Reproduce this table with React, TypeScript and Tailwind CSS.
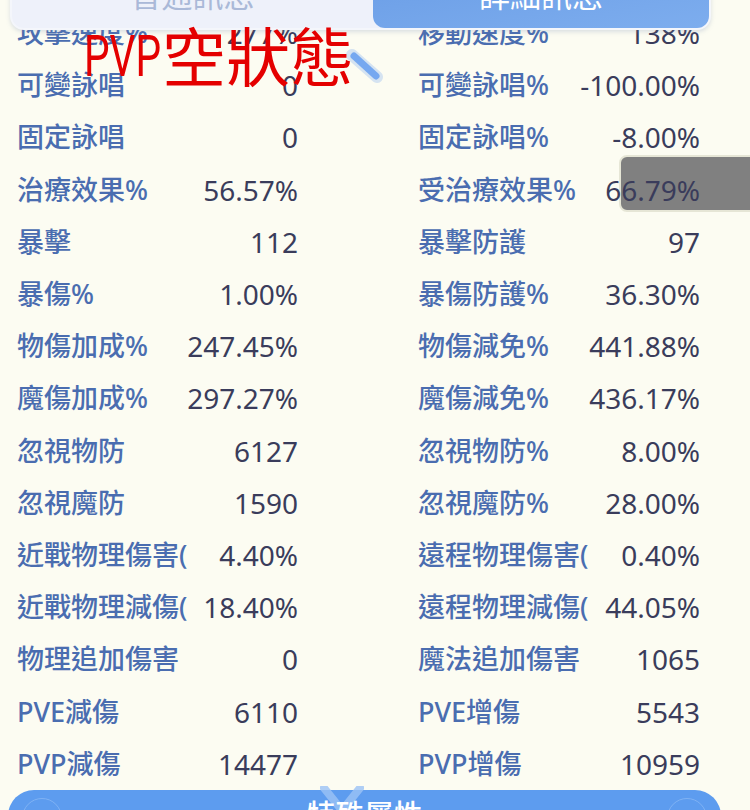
import React from 'react'

type Stat = { label: string; value: string }

const rows: [Stat, Stat][] = [
  [{ label: '攻擊速度%', value: '277%' }, { label: '移動速度%', value: '138%' }],
  [{ label: '可變詠唱', value: '0' }, { label: '可變詠唱%', value: '-100.00%' }],
  [{ label: '固定詠唱', value: '0' }, { label: '固定詠唱%', value: '-8.00%' }],
  [{ label: '治療效果%', value: '56.57%' }, { label: '受治療效果%', value: '66.79%' }],
  [{ label: '暴擊', value: '112' }, { label: '暴擊防護', value: '97' }],
  [{ label: '暴傷%', value: '1.00%' }, { label: '暴傷防護%', value: '36.30%' }],
  [{ label: '物傷加成%', value: '247.45%' }, { label: '物傷減免%', value: '441.88%' }],
  [{ label: '魔傷加成%', value: '297.27%' }, { label: '魔傷減免%', value: '436.17%' }],
  [{ label: '忽視物防', value: '6127' }, { label: '忽視物防%', value: '8.00%' }],
  [{ label: '忽視魔防', value: '1590' }, { label: '忽視魔防%', value: '28.00%' }],
  [{ label: '近戰物理傷害(%)', value: '4.40%' }, { label: '遠程物理傷害(%)', value: '0.40%' }],
  [{ label: '近戰物理減傷(%)', value: '18.40%' }, { label: '遠程物理減傷(%)', value: '44.05%' }],
  [{ label: '物理追加傷害', value: '0' }, { label: '魔法追加傷害', value: '1065' }],
  [{ label: 'PVE減傷', value: '6110' }, { label: 'PVE增傷', value: '5543' }],
  [{ label: 'PVP減傷', value: '14477' }, { label: 'PVP增傷', value: '10959' }],
]

const font = { fontFamily: '"Noto Sans", "Noto Sans CJK TC", sans-serif' }

function Cell({ stat, className }: { stat: Stat; className: string }) {
  return (
    <div className={`flex items-center justify-between ${className}`}>
      <span className="max-w-[170px] overflow-hidden whitespace-nowrap text-[27px] font-medium leading-[36px] text-[#4a6db0]">
        {stat.label}
      </span>
      <span className="whitespace-nowrap text-[28px] leading-[36px] text-[#3a3c5b]">{stat.value}</span>
    </div>
  )
}

export default function App() {
  return (
    <div className="relative h-[810px] w-[750px] overflow-hidden bg-[#fcfcf2]" style={font}>
      {/* gray overlay box */}
      <div className="absolute left-[619px] top-[155px] h-[57px] w-[150px] rounded-lg border-2 border-[#e6e6d6] bg-[#808080]" />

      {/* stat rows */}
      <div className="relative z-[1] pt-[7px]">
        {rows.map(([l, r], i) => (
          <div key={i} className="flex h-[52.2px] items-center">
            <Cell stat={l} className="ml-[17px] w-[281px]" />
            <Cell stat={r} className="ml-[120px] w-[282px]" />
          </div>
        ))}
      </div>

      {/* tab bar */}
      <div className="absolute left-[10px] top-[-40px] z-[2] flex h-[70px] w-[701px] rounded-b-[14px] border-2 border-[#f4f6fb] bg-[#eef1fa] shadow-[0_2px_4px_rgba(120,140,180,0.25)]">
        <div className="flex flex-1 items-center justify-center text-[31px] text-[#aab9d8]">普通訊息</div>
        <div className="flex w-[336px] items-center justify-center rounded-[12px] bg-gradient-to-br from-[#6a9de6] to-[#7dadee] text-[31px] text-white">
          詳細訊息
        </div>
      </div>

      {/* stray search stroke */}
      <svg className="absolute left-[342px] top-[47px] z-[3]" width="46" height="40" viewBox="0 0 46 40">
        <line x1="10" y1="8" x2="35" y2="30" stroke="#7aaaf0" strokeOpacity="0.3" strokeWidth="12" strokeLinecap="round" />
        <line x1="12" y1="9" x2="34" y2="29" stroke="#76a8f0" strokeWidth="7" strokeLinecap="round" />
      </svg>

      {/* red overlay caption */}
      <div
        className="absolute left-[84px] top-[21px] z-[4] flex items-end whitespace-nowrap text-[64px] leading-none text-[#e40000]"
        style={{ fontFamily: '"Noto Sans CJK TC", sans-serif' }}
      >
        <span
          className="inline-block w-[78px] origin-left scale-x-[0.7]"
          style={{ fontFamily: 'Roboto, sans-serif', fontSize: '58px' }}
        >
          PVP
        </span>
        <span>空狀態</span>
      </div>

      {/* bottom section header */}
      <div className="absolute left-[8px] top-[790px] z-[2] flex h-[60px] w-[713px] justify-center rounded-t-[26px] bg-[#5d9cef]">
        <div className="absolute left-[14px] top-[8px] h-[40px] w-[40px] rounded-full border border-[#7fb2f4]" />
        <div className="absolute right-[14px] top-[8px] h-[40px] w-[40px] rounded-full border border-[#7fb2f4]" />
        <svg className="absolute left-[312px] top-[-4px]" width="44" height="30" viewBox="0 0 44 30">
          <path d="M4 2 L20 22 M40 2 L24 22" stroke="#9cc3f6" strokeWidth="8" strokeLinecap="round" opacity="0.8" />
        </svg>
        <span className="relative mt-[10px] text-[29px] font-medium leading-none text-white">特殊屬性</span>
      </div>
    </div>
  )
}
